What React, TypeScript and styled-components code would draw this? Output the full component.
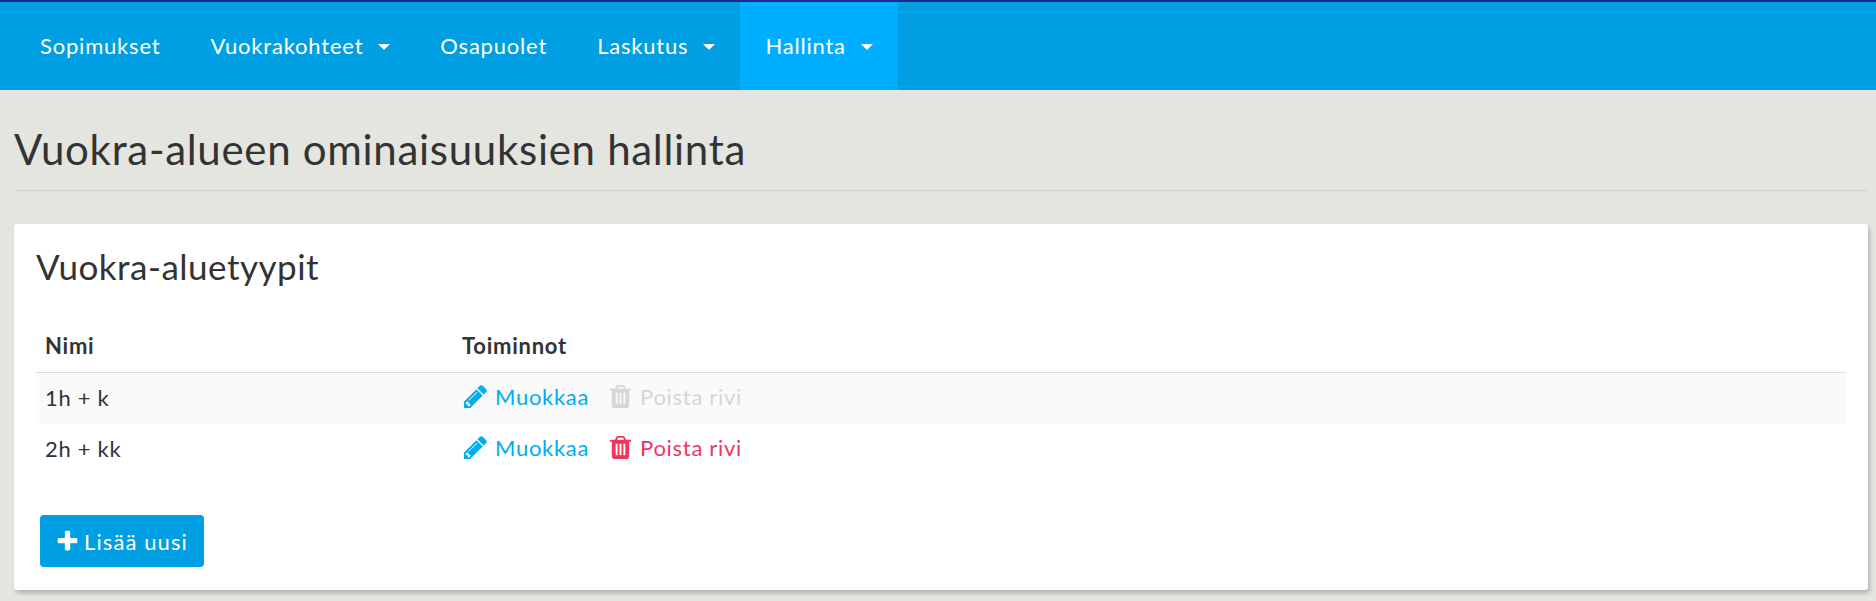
import React, { FunctionComponent } from 'react'
import styled, { createGlobalStyle } from 'styled-components'

const menuItems = [
    { label: 'Sopimukset' },
    { label: 'Vuokrakohteet', dropdown: true },
    { label: 'Osapuolet' },
    { label: 'Laskutus', dropdown: true },
    { label: 'Hallinta', dropdown: true, active: true },
]

const rows = [
    { name: '1h + k', canDelete: false },
    { name: '2h + kk', canDelete: true },
]

const PencilIcon = () => (
    <svg viewBox="0 0 1792 1792" fill="currentColor">
        <path d="M491 1536l91-91-235-235-91 91v107h128v128h107zm523-928q0-22-22-22-10 0-17 7l-542 542q-7 7-7 17 0 22 22 22 10 0 17-7l542-542q7-7 7-17zm-54-192l416 416-832 832h-416v-416zm683 96q0 53-37 90l-166 166-416-416 166-165q36-38 90-38 53 0 91 38l235 234q37 39 37 91z" />
    </svg>
)

const TrashIcon = () => (
    <svg viewBox="0 0 1792 1792" fill="currentColor">
        <path d="M704 1376v-704q0-14-9-23t-23-9h-64q-14 0-23 9t-9 23v704q0 14 9 23t23 9h64q14 0 23-9t9-23zm256 0v-704q0-14-9-23t-23-9h-64q-14 0-23 9t-9 23v704q0 14 9 23t23 9h64q14 0 23-9t9-23zm256 0v-704q0-14-9-23t-23-9h-64q-14 0-23 9t-9 23v704q0 14 9 23t23 9h64q14 0 23-9t9-23zm-544-992h448l-48-117q-7-9-17-11h-317q-10 2-17 11zm928 32v64q0 14-9 23t-23 9h-96v948q0 83-47 143.5t-113 60.5h-832q-66 0-113-58.5t-47-141.5v-952h-96q-14 0-23-9t-9-23v-64q0-14 9-23t23-9h309l70-167q15-37 54-63t79-26h320q40 0 79 26t54 63l70 167h309q14 0 23 9t9 23z" />
    </svg>
)

const PlusIcon = () => (
    <svg viewBox="0 0 1792 1792" fill="currentColor">
        <path d="M1600 736v192q0 40-28 68t-68 28h-416v416q0 40-28 68t-68 28h-192q-40 0-68-28t-28-68v-416h-416q-40 0-68-28t-28-68v-192q0-40 28-68t68-28h416v-416q0-40 28-68t68-28h192q40 0 68 28t28 68v416h416q40 0 68 28t28 68z" />
    </svg>
)

const App: FunctionComponent = () => {
    return (
        <>
            <GlobalStyle />
            <NavBar>
                {menuItems.map(item => (
                    <NavItem key={item.label} $active={item.active}>
                        {item.label}
                        {item.dropdown ? <Caret /> : null}
                    </NavItem>
                ))}
            </NavBar>
            <Page>
                <PageHeader>
                    <PageTitle>Vuokra-alueen ominaisuuksien hallinta</PageTitle>
                </PageHeader>
                <Card>
                    <CardTitle>Vuokra-aluetyypit</CardTitle>
                    <Table>
                        <thead>
                            <tr>
                                <NameHead>Nimi</NameHead>
                                <Head>Toiminnot</Head>
                            </tr>
                        </thead>
                        <tbody>
                            {rows.map(row => (
                                <Row key={row.name}>
                                    <Cell>{row.name}</Cell>
                                    <Cell>
                                        <Action $color="#00aeef">
                                            <PencilIcon />
                                            Muokkaa
                                        </Action>
                                        <Action $color={row.canDelete ? '#f0365f' : '#d6d6d6'}>
                                            <TrashIcon />
                                            Poista rivi
                                        </Action>
                                    </Cell>
                                </Row>
                            ))}
                        </tbody>
                    </Table>
                    <AddButton>
                        <PlusIcon />
                        Lisää uusi
                    </AddButton>
                </Card>
            </Page>
        </>
    )
}

const GlobalStyle = createGlobalStyle`
    html, body {
        margin: 0;
        padding: 0;
        background: #e4e5df;
    }

    body {
        font-family: "Lato", "Open Sans", sans-serif;
        color: #333333;
    }
`

const NavBar = styled.nav`
    display: flex;
    height: 88px;
    padding-left: 15px;
    background-color: #009fe3;
    border-top: 2px solid #1b2a8c;
`

const NavItem = styled.div<{ $active?: boolean }>`
    display: flex;
    align-items: center;
    padding: 0 25px 2px 25px;
    color: #ffffff;
    font-size: 22px;
    letter-spacing: 0.8px;
    background-color: ${props => (props.$active ? '#00aeff' : 'transparent')};
`

const Caret = styled.span`
    width: 0;
    height: 0;
    margin-left: 15px;
    margin-top: 3px;
    border-top: 6px solid #ffffff;
    border-left: 6px solid transparent;
    border-right: 6px solid transparent;
`

const Page = styled.main`
    padding: 0 8px 11px 14px;
`

const PageHeader = styled.header`
    height: 100px;
    border-bottom: 1px solid #d2d3cd;
    margin-bottom: 33px;
`

const PageTitle = styled.h1`
    margin: 0;
    padding-top: 34px;
    font-size: 42px;
    line-height: 50px;
    font-weight: 400;
    letter-spacing: 0.7px;
    color: #333333;
`

const Card = styled.section`
    height: 366px;
    box-sizing: border-box;
    padding: 21px 22px 0 22px;
    background-color: #ffffff;
    border-radius: 3px;
    box-shadow: 2px 3px 4px rgba(0, 0, 0, 0.22);
`

const CardTitle = styled.h2`
    margin: 0 0 33px 0;
    font-size: 35px;
    line-height: 42px;
    font-weight: 400;
    letter-spacing: 0.5px;
    color: #333333;
`

const Table = styled.table`
    width: 100%;
    border-collapse: collapse;
    font-size: 22px;
`

const Head = styled.th`
    height: 51px;
    padding: 0 9px 1px 9px;
    text-align: left;
    font-weight: 700;
    font-size: 22px;
    letter-spacing: 0.75px;
    border-bottom: 1px solid #dddddd;
`

const NameHead = styled(Head)`
    width: 399px;
`

const Row = styled.tr`
    &:nth-child(odd) {
        background-color: #fafafa;
    }
`

const Cell = styled.td`
    height: 49px;
    padding: 0 9px 2px 9px;
    letter-spacing: 0.7px;
`

const Action = styled.span<{ $color: string }>`
    display: inline-flex;
    align-items: center;
    gap: 6px;
    margin: 0 18px 0 0;
    padding-top: 2px;
    color: ${props => props.$color};

    svg {
        width: 27px;
        height: 27px;
    }
`

const AddButton = styled.button`
    display: flex;
    align-items: center;
    gap: 4px;
    width: 164px;
    height: 52px;
    margin: 40px 0 0 4px;
    padding: 0 0 0 15px;
    border: 0;
    border-radius: 4px;
    background-color: #009fe3;
    color: #ffffff;
    font-family: inherit;
    font-size: 22px;
    letter-spacing: 1.1px;

    svg {
        width: 25px;
        height: 25px;
    }
`

export default App
